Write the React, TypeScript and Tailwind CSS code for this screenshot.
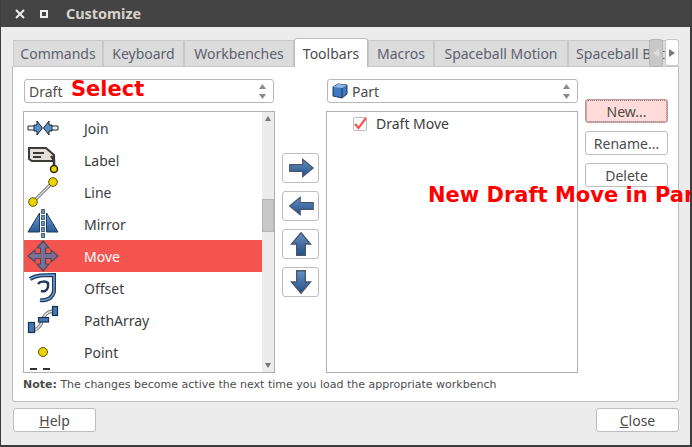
import React from "react";

const ui = "font-['Noto_Sans','Open_Sans',sans-serif]";

const tabs = [
  { label: "Commands", w: "w-[90px]" },
  { label: "Keyboard", w: "w-[81px]" },
  { label: "Workbenches", w: "w-[110px]" },
  { label: "Toolbars", w: "w-[74px]", active: true },
  { label: "Macros", w: "w-[66px]" },
  { label: "Spaceball Motion", w: "w-[134px]" },
  { label: "Spaceball Buttons", w: "w-[134px]" },
];

const Spin = () => (
  <svg width="9" height="17" viewBox="0 0 9 17" className="shrink-0">
    <path d="M4.5 1 L8 6 H1 Z" fill="#8a8a8a" />
    <path d="M4.5 16 L8 11 H1 Z" fill="#8a8a8a" />
  </svg>
);

const Combo = ({ children }: { children: React.ReactNode }) => (
  <div className="h-6 flex items-center justify-between rounded-[3px] border border-[#b8b8b8] bg-white pl-[4px] pr-[6px] text-[#4c4c4c] text-[14px]">
    <div className="flex items-center">{children}</div>
    <Spin />
  </div>
);

const JoinIcon = () => (
  <svg width="32" height="32" viewBox="0 0 32 32">
    <path d="M1 14h7v4H1zM24 14h7v4h-7z" fill="#f2f2f2" stroke="#1f2a38" strokeWidth="1" />
    <g fill="#5b8fc7" stroke="#1f2a38" strokeWidth="1">
      <path d="M7 13h3v-4l5.500 7-5.500 7v-4H7z" />
      <path d="M25 13h-3v-4l-5.500 7 5.500 7v-4h3z" />
    </g>
  </svg>
);
const LabelIcon = () => (
  <svg width="32" height="32" viewBox="0 0 32 32">
    <path d="M2 4h17l8 7v6H5l-3-2z" fill="#e4e0d8" stroke="#3a3a36" strokeWidth="2" />
    <path d="M6 9h11M6 13h8" stroke="#3a3a36" strokeWidth="2" />
    <path d="M24 12l3 4v7" fill="none" stroke="#3a3a36" strokeWidth="2.500" />
    <circle cx="27" cy="25" r="3.500" fill="#edd400" stroke="#302b00" strokeWidth="1.500" />
  </svg>
);
const LineIcon = () => (
  <svg width="32" height="32" viewBox="0 0 32 32">
    <path d="M6 26 L26 6" stroke="#555" strokeWidth="3" />
    <path d="M6 26 L26 6" stroke="#e8e8e8" strokeWidth="1.400" />
    <circle cx="26" cy="6" r="4.300" fill="#edd400" stroke="#5c5200" strokeWidth="1" />
    <circle cx="6" cy="26" r="4.300" fill="#edd400" stroke="#5c5200" strokeWidth="1" />
  </svg>
);
const MirrorIcon = () => (
  <svg width="32" height="32" viewBox="0 0 32 32">
    <defs>
      <linearGradient id="mirror" x1="0" y1="0" x2="0" y2="1">
        <stop offset="0" stopColor="#6f9bd0" />
        <stop offset="1" stopColor="#2a5a96" />
      </linearGradient>
    </defs>
    <path d="M12.500 5 V24 H1 Z" fill="url(#mirror)" stroke="#1c3a5c" strokeWidth="1" />
    <path d="M19.500 5 V24 H31 Z" fill="url(#mirror)" stroke="#1c3a5c" strokeWidth="1" />
    <path d="M16 1V31" stroke="#1c3a5c" strokeWidth="3.500" strokeDasharray="5 1" />
    <path d="M16 1.500V30" stroke="#7fa8d4" strokeWidth="1.600" strokeDasharray="4 2" />
  </svg>
);
const MoveIcon = () => (
  <svg width="32" height="32" viewBox="0 0 32 32">
    <path
      d="M16 1 L22 8 H18.500 V13.500 H24 V10 L31 16 L24 22 V18.500 H18.500 V24 H22 L16 31 L10 24 H13.500 V18.500 H8 V22 L1 16 L8 10 V13.500 H13.500 V8 H10 Z"
      fill="#7b6f96"
      stroke="#4a4a5c"
      strokeWidth="1.200"
    />
  </svg>
);
const OffsetIcon = () => (
  <svg width="32" height="32" viewBox="0 0 32 32">
    <path d="M3 7 C9 3 16 3 27 3 V19 C26 26 20 29 13 28" fill="none" stroke="#1f3a5c" strokeWidth="4" />
    <path d="M3 7 C9 3 16 3 27 3 V19 C26 26 20 29 13 28" fill="none" stroke="#6d9ccf" strokeWidth="1.600" />
    <path d="M11 12 C13 9 19 9 21 11 V15 C20 19 17 20 14 19" fill="none" stroke="#1f3a5c" strokeWidth="2.500" />
  </svg>
);
const PathArrayIcon = () => (
  <svg width="32" height="32" viewBox="0 0 32 32">
    <path d="M6 27 C10 25 12 24 14 20 C17 10 20 8 26 7" fill="none" stroke="#777" strokeWidth="3.500" />
    <path d="M6 27 C10 25 12 24 14 20 C17 10 20 8 26 7" fill="none" stroke="#e4e4e4" strokeWidth="1.500" />
    <g fill="#4379b0" stroke="#16304f" strokeWidth="1.200">
      <rect x="1.500" y="18.500" width="6" height="10" />
      <rect x="11.500" y="13.500" width="10" height="4.500" />
      <rect x="25.500" y="2.500" width="5" height="9" />
    </g>
  </svg>
);
const PointIcon = () => (
  <svg width="32" height="32" viewBox="0 0 32 32">
    <circle cx="16" cy="16" r="4.500" fill="#edd400" stroke="#5c5200" strokeWidth="1" />
  </svg>
);

const rows = [
  { label: "Join", icon: <JoinIcon /> },
  { label: "Label", icon: <LabelIcon /> },
  { label: "Line", icon: <LineIcon /> },
  { label: "Mirror", icon: <MirrorIcon /> },
  { label: "Move", icon: <MoveIcon />, selected: true },
  { label: "Offset", icon: <OffsetIcon /> },
  { label: "PathArray", icon: <PathArrayIcon /> },
  { label: "Point", icon: <PointIcon /> },
];

const arrows = [
  "M4 11h15V5l12 10-12 10v-6H4z",
  "M31 11H16V5L4 15l12 10v-6h15z",
  "M17 2l11 13h-6v13H12V15H6z",
  "M17 28l11-13h-6V2H12v13H6z",
];

const ArrowButton = ({ d }: { d: string }) => (
  <div className="w-[37px] h-[30px] flex items-center justify-center rounded-[3px] border border-[#bdbdbd] bg-white">
    <svg width="30" height="26" viewBox="0 0 34 30">
      <defs>
        <linearGradient id="ab" x1="0" y1="0" x2="0" y2="1">
          <stop offset="0" stopColor="#6791c6" />
          <stop offset="1" stopColor="#234f88" />
        </linearGradient>
      </defs>
      <path d={d} fill="url(#ab)" stroke="#46566e" strokeWidth="1.500" />
    </svg>
  </div>
);

const SideButton = ({ label, focus }: { label: string; focus?: boolean }) => (
  <div
    className={`h-6 flex items-center justify-center rounded-[3px] border text-[14px] text-[#4c4c4c] ${
      focus ? "border-[#c09a9a] bg-[#ffdcd9] outline-1 outline-dotted outline-[#8a6a6a] -outline-offset-2" : "border-[#bdbdbd] bg-white"
    }`}
  >
    {label}
  </div>
);

export default function App() {
  return (
    <div className={`${ui} relative w-[692px] h-[447px] overflow-hidden bg-[#ececec] flex flex-col border-l border-r-2 border-b-2 border-[#3c3c3c]`}>
      {/* Title bar */}
      <div className="h-[27px] -mr-[2px] -ml-[1px] shrink-0 bg-[#444444] flex items-center pl-[15px]">
        <svg width="10" height="10" viewBox="0 0 10 10">
          <path d="M1 1l8 8M9 1l-8 8" stroke="#eeeeee" strokeWidth="2" />
        </svg>
        <div className="ml-[15px] w-[8px] h-[8px] border-2 border-[#eeeeee]" />
        <span className="ml-[18px] text-[14.400px] font-bold text-[#d8d4cc]">Customize</span>
      </div>

      <div className="flex-1 flex flex-col pl-[11px] pr-[11px] pt-[11px]">
        {/* Tabs */}
        <div className="relative h-[29px] shrink-0 flex items-end -mb-px z-10">
          <div className="flex items-end w-full overflow-hidden h-[29px] pl-px">
            {tabs.map((t) =>
              t.active ? (
                <div
                  key={t.label}
                  className={`${t.w} shrink-0 h-[29px] bg-white border border-b-0 border-[#bdbdbd] rounded-t-[3px] flex items-center justify-center text-[14px] text-[#4c4c4c]`}
                >
                  {t.label}
                </div>
              ) : (
                <div
                  key={t.label}
                  className={`${t.w} shrink-0 h-[27px] bg-[#dcdcdc] border border-[#c8c8c8] flex items-center justify-center whitespace-nowrap text-[14px] text-[#5c616c]`}
                >
                  {t.label}
                </div>
              ),
            )}
          </div>
          <div className="absolute right-[16px] top-[1px] w-[14px] h-[28px] rounded-[3px] bg-[#c8c8c8] border border-[#b4b4b4] flex items-center justify-center">
            <svg width="6" height="8" viewBox="0 0 6 8">
              <path d="M6 0v8L0 4z" fill="#dddddd" />
            </svg>
          </div>
          <div className="absolute right-0 top-[1px] w-[14px] h-[27px] rounded-[3px] bg-white border border-[#c8c8c8] flex items-center justify-center">
            <svg width="6" height="8" viewBox="0 0 6 8">
              <path d="M0 0v8l6-4z" fill="#7a7a7a" />
            </svg>
          </div>
        </div>

        {/* Panel */}
        <div className="h-[336px] shrink-0 bg-white border border-[#bdbdbd] rounded-b-[3px] pl-[10px] pt-[12px] flex flex-col">
          <div className="flex">
            <div className="w-[252px] shrink-0 flex flex-col gap-2">
              <div className="pl-px pr-px">
                <Combo>
                  <span>Draft</span>
                </Combo>
              </div>
              <div className="h-[262px] border border-[#b0b0b0] flex overflow-hidden">
                <div className="flex-1 flex flex-col">
                  {rows.map((r) => (
                    <div
                      key={r.label}
                      className={`h-8 shrink-0 flex items-center gap-[25px] pl-[3px] text-[14px] ${
                        r.selected ? "bg-[#f55550] text-white" : "text-[#3c3c3c]"
                      }`}
                    >
                      <span className="w-8 h-8 block shrink-0">{r.icon}</span>
                      <span>{r.label}</span>
                    </div>
                  ))}
                  <div className="h-[3px] flex gap-[6px] pl-[6px] shrink-0">
                    <span className="w-[7px] h-[2px] bg-[#333333]" />
                    <span className="w-[7px] h-[2px] bg-[#333333]" />
                  </div>
                </div>
                <div className="w-[12px] shrink-0 bg-[#ececec] flex flex-col items-center">
                  <svg width="6" height="5" viewBox="0 0 6 5" className="mt-[4px] shrink-0">
                    <path d="M3 0l3 5H0z" fill="#777777" />
                  </svg>
                  <div className="w-full h-[33px] mt-[78px] bg-[#c8c8c8] border border-[#b4b4b4]" />
                  <svg width="6" height="5" viewBox="0 0 6 5" className="mt-auto mb-[4px] shrink-0">
                    <path d="M3 5l3-5H0z" fill="#777777" />
                  </svg>
                </div>
              </div>
            </div>

            <div className="w-[51px] shrink-0 flex flex-col items-center gap-2 pt-[74px]">
              <ArrowButton d={arrows[0]} />
              <ArrowButton d={arrows[1]} />
              <ArrowButton d={arrows[2]} />
              <ArrowButton d={arrows[3]} />
            </div>

            <div className="w-[252px] shrink-0 flex flex-col gap-2">
              <div className="pl-px">
                <Combo>
                  <svg width="16" height="16" viewBox="0 0 16 16" className="mr-[4px]">
                    <path d="M1 4l5-3 9 1v9l-5 4-9-2z" fill="#3f79c0" stroke="#1d3a63" strokeWidth="1" />
                    <path d="M1 4l9 1 5-3-9-1z" fill="#8db4e3" />
                    <path d="M10 5v10" stroke="#1d3a63" strokeWidth="1" />
                  </svg>
                  <span>Part</span>
                </Combo>
              </div>
              <div className="h-[262px] border border-[#b0b0b0] pl-[26px] pt-[1px]">
                <div className="flex items-center gap-[9px] text-[14px] text-[#3c3c3c]">
                  <div className="w-[14px] h-[14px] mt-[1px] rounded-[2px] border border-[#bdbdbd] flex items-center justify-center shrink-0">
                    <svg width="14" height="12" viewBox="0 0 14 12" className="shrink-0 overflow-visible">
                      <path d="M2 6l3.500 4L13 0" fill="none" stroke="#f55550" strokeWidth="2.200" />
                    </svg>
                  </div>
                  Draft Move
                </div>
              </div>
            </div>

            <div className="w-[83px] ml-[7px] shrink-0 flex flex-col gap-2 pt-[20px]">
              <SideButton label="New..." focus />
              <SideButton label="Rename..." />
              <SideButton label="Delete" />
            </div>
          </div>

          <p className="mt-[4px] text-[11px] text-[#4c4c4c] font-['DejaVu_Sans',sans-serif]">
            <b>Note:</b> The changes become active the next time you load the appropriate workbench
          </p>
        </div>

        {/* Bottom buttons */}
        <div className="flex justify-between mt-[6px] pl-px">
          <div className="w-[83px] h-6 flex items-center justify-center rounded-[3px] border border-[#bdbdbd] bg-white text-[14px] text-[#4c4c4c]">
            <span><u>H</u>elp</span>
          </div>
          <div className="w-[83px] h-6 flex items-center justify-center rounded-[3px] border border-[#bdbdbd] bg-white text-[14px] text-[#4c4c4c]">
            <span><u>C</u>lose</span>
          </div>
        </div>
      </div>

      {/* Annotations painted over the dialog */}
      <span className="absolute left-[70px] top-[75px] text-[21px] leading-7 font-bold text-[#ff0000] font-['DejaVu_Sans',sans-serif]">
        Select
      </span>
      <span className="absolute left-[427px] top-[181px] text-[21px] leading-7 font-bold text-[#ff0000] whitespace-nowrap font-['DejaVu_Sans',sans-serif]">
        New Draft Move in Part
      </span>
    </div>
  );
}
